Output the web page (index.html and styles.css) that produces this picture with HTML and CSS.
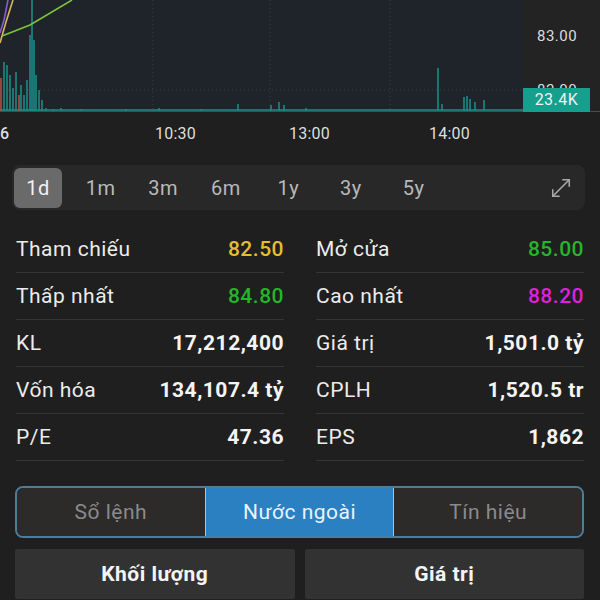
FILE: index.html
```html
<!doctype html>
<html>
<head>
  <meta charset="utf-8">
  <title>Chi tiết cổ phiếu</title>
  <link rel="stylesheet" href="styles.css">
</head>
<body>
  <!-- price / volume chart -->
  <div class="chart">
    <svg class="plot" width="523" height="112" viewBox="0 0 523 112">
      <rect width="523" height="112" fill="#1f232a"/>
      <g class="grid">
        <line x1="153" y1="0" x2="153" y2="112"/>
        <line x1="270" y1="0" x2="270" y2="112"/>
        <line x1="390" y1="0" x2="390" y2="112"/>
        <line x1="0" y1="90" x2="523" y2="90"/>
      </g>
      <g class="vol">
        <rect x="3" y="62" width="2" height="50"/>
        <rect x="6" y="65" width="2" height="47"/>
        <rect x="9" y="75" width="2" height="37"/>
        <rect x="12" y="88" width="2" height="24"/>
        <rect x="15" y="72" width="2" height="40"/>
        <rect x="20" y="85" width="2" height="27"/>
        <rect x="23" y="95" width="2" height="17"/>
        <rect x="26" y="80" width="2" height="32"/>
        <rect x="29" y="35" width="2" height="77"/>
        <rect x="31" y="0" width="2" height="112"/>
        <rect x="33" y="40" width="2" height="72"/>
        <rect x="35" y="75" width="2" height="37"/>
        <rect x="38" y="90" width="2" height="22"/>
        <rect x="41" y="100" width="2" height="12"/>
        <rect x="45" y="108" width="2" height="4"/>
        <rect x="52" y="109" width="2" height="3"/>
        <rect x="60" y="108" width="2" height="4"/>
        <rect x="80" y="109" width="2" height="3"/>
        <rect x="125" y="109" width="2" height="3"/>
        <rect x="158" y="108" width="2" height="4"/>
        <rect x="200" y="109" width="2" height="3"/>
        <rect x="237" y="104" width="2" height="8"/>
        <rect x="270" y="105" width="2" height="7"/>
        <rect x="278" y="102" width="2" height="10"/>
        <rect x="283" y="105" width="2" height="7"/>
        <rect x="305" y="108" width="2" height="4"/>
        <rect x="437" y="68" width="2" height="44"/>
        <rect x="441" y="104" width="2" height="8"/>
        <rect x="463" y="97" width="2" height="15"/>
        <rect x="466" y="96" width="2" height="16"/>
        <rect x="469" y="99" width="2" height="13"/>
        <rect x="474" y="102" width="2" height="10"/>
        <rect x="483" y="100" width="2" height="12"/>
        <rect x="0" y="109" width="523" height="2" opacity="0.25"/>
      </g>
      <g class="vol-down">
        <rect x="0" y="78" width="2" height="34"/>
        <rect x="18" y="95" width="2" height="17"/>
      </g>
      <polyline class="ln-purple" points="0,33 4,20 8,0"/>
      <polyline class="ln-yellow" points="0,43 6,22 13,0"/>
      <polyline class="ln-green" points="2,36 30,25 72,0"/>
      <line class="baseline" x1="0" y1="111.5" x2="523" y2="111.5"/>
    </svg>
    <div class="axis">
      <span class="tick tick-top">83.00</span>
      <span class="tick tick-low">82.00</span>
      <span class="badge">23.4K</span>
    </div>
  </div>

  <div class="times">
    <span class="time first">6</span>
    <span class="time" style="left:155px">10:30</span>
    <span class="time" style="left:289px">13:00</span>
    <span class="time" style="left:429px">14:00</span>
  </div>

  <!-- period selector -->
  <div class="periods">
    <button class="period active">1d</button>
    <button class="period">1m</button>
    <button class="period">3m</button>
    <button class="period">6m</button>
    <button class="period">1y</button>
    <button class="period">3y</button>
    <button class="period">5y</button>
    <span class="expand">
      <svg width="22" height="22" viewBox="0 0 24 24" fill="none" stroke="#a9a9a9" stroke-width="1.7" stroke-linecap="round" stroke-linejoin="round">
        <line x1="3" y1="21" x2="21" y2="3"/>
        <polyline points="14,3 21,3 21,10"/>
        <polyline points="3,14 3,21 10,21"/>
      </svg>
    </span>
  </div>

  <!-- stats -->
  <div class="stats">
    <div class="col">
      <div class="row"><span class="label">Tham chiếu</span><span class="value ref">82.50</span></div>
      <div class="row"><span class="label">Thấp nhất</span><span class="value up">84.80</span></div>
      <div class="row"><span class="label">KL</span><span class="value">17,212,400</span></div>
      <div class="row"><span class="label">Vốn hóa</span><span class="value">134,107.4 tỷ</span></div>
      <div class="row"><span class="label">P/E</span><span class="value">47.36</span></div>
    </div>
    <div class="col">
      <div class="row"><span class="label">Mở cửa</span><span class="value up">85.00</span></div>
      <div class="row"><span class="label">Cao nhất</span><span class="value ceil">88.20</span></div>
      <div class="row"><span class="label">Giá trị</span><span class="value">1,501.0 tỷ</span></div>
      <div class="row"><span class="label">CPLH</span><span class="value">1,520.5 tr</span></div>
      <div class="row"><span class="label">EPS</span><span class="value">1,862</span></div>
    </div>
  </div>

  <div class="tabs">
    <button class="tab">Sổ lệnh</button>
    <button class="tab active">Nước ngoài</button>
    <button class="tab">Tín hiệu</button>
  </div>

  <div class="actions">
    <button class="action">Khối lượng</button>
    <button class="action">Giá trị</button>
  </div>
</body>
</html>
```

FILE: styles.css
```css
body {
  margin: 0;
  width: 600px;
  height: 600px;
  overflow: hidden;
  background-color: #1f1f1f;
  color: #ececec;
  font-family: Roboto, "Noto Sans", sans-serif;
  letter-spacing: 0.5px;
}
button {
  font-family: inherit;
  letter-spacing: inherit;
  border: none;
  cursor: pointer;
}

/* chart */
.chart {
  display: flex;
  height: 112px;
}
.plot {
  display: block;
}
.grid line {
  stroke: #3a4048;
  stroke-width: 1;
  stroke-dasharray: 1 3;
}
.vol rect {
  fill: #1a8a84;
  opacity: 0.8;
}
.vol-down rect {
  fill: #b0504a;
  opacity: 0.8;
}
.ln-purple, .ln-yellow, .ln-green {
  fill: none;
  stroke-width: 1.6;
}
.ln-purple { stroke: #8a5cd0; }
.ln-yellow { stroke: #d9b65a; }
.ln-green { stroke: #7cc43a; }
.baseline {
  stroke: #4a4a4a;
  stroke-width: 1;
}
.axis {
  position: relative;
  flex: 1;
  background-color: #232323;
  border-bottom: 1px solid #4a4a4a;
}
.tick {
  position: absolute;
  left: 14px;
  font-size: 15px;
  color: #dcdcdc;
}
.tick-top { top: 27px; }
.tick-low { top: 81px; }
.badge {
  position: absolute;
  left: 0;
  top: 88px;
  width: 67px;
  height: 24px;
  line-height: 24px;
  text-align: center;
  background-color: #14a08c;
  color: #f2f2f2;
  font-size: 16px;
}

/* time axis */
.times {
  position: relative;
  height: 38px;
}
.time {
  position: absolute;
  top: 12px;
  font-size: 16px;
  letter-spacing: 0.2px;
  color: #dedede;
}
.time.first {
  left: 0;
  font-weight: 500;
}

/* period selector */
.periods {
  display: flex;
  align-items: center;
  gap: 14.6px;
  height: 45px;
  margin: 15px 15px 0 12px;
  padding: 0 2px;
  background-color: #282828;
  border-radius: 8px;
}
.period {
  width: 48px;
  height: 40px;
  padding: 0;
  font-size: 20px;
  color: #b9b9b9;
  background: none;
  border-radius: 6px;
}
.period.active {
  background-color: #6a6a6a;
  color: #f2f2f2;
}
.expand {
  display: flex;
  margin-left: auto;
  margin-right: 11px;
}

/* stats */
.stats {
  display: grid;
  grid-template-columns: 1fr 1fr;
  column-gap: 32px;
  padding: 16px 16px 0;
}
.row {
  display: flex;
  justify-content: space-between;
  align-items: center;
  height: 46px;
  border-bottom: 1px solid #353535;
  font-size: 21px;
}
.label {
  color: #ececec;
}
.value {
  font-weight: 700;
  color: #f4f4f4;
}
.value.ref { color: #e6bd2e; font-weight: 500; }
.value.up { color: #25b52b; font-weight: 500; }
.value.ceil { color: #dc22dc; font-weight: 500; }

/* tabs */
.tabs {
  display: flex;
  height: 48px;
  margin: 25px 16px 0 15px;
  border: 2px solid #4e7d9c;
  border-radius: 8px;
  overflow: hidden;
}
.tab {
  flex: 1;
  font-size: 21px;
  color: #8a8a8a;
  background-color: #2d2b2a;
}
.tab.active {
  background-color: #2b80c2;
  color: #eaf2fa;
  border-left: 1px solid #9cc6e6;
  border-right: 1px solid #9cc6e6;
}

/* actions */
.actions {
  display: flex;
  gap: 10px;
  margin: 11px 16px 0 15px;
}
.action {
  flex: 1;
  height: 50px;
  font-size: 21px;
  font-weight: 700;
  color: #f4f4f4;
  background-color: #323232;
  border-radius: 2px;
}
```
